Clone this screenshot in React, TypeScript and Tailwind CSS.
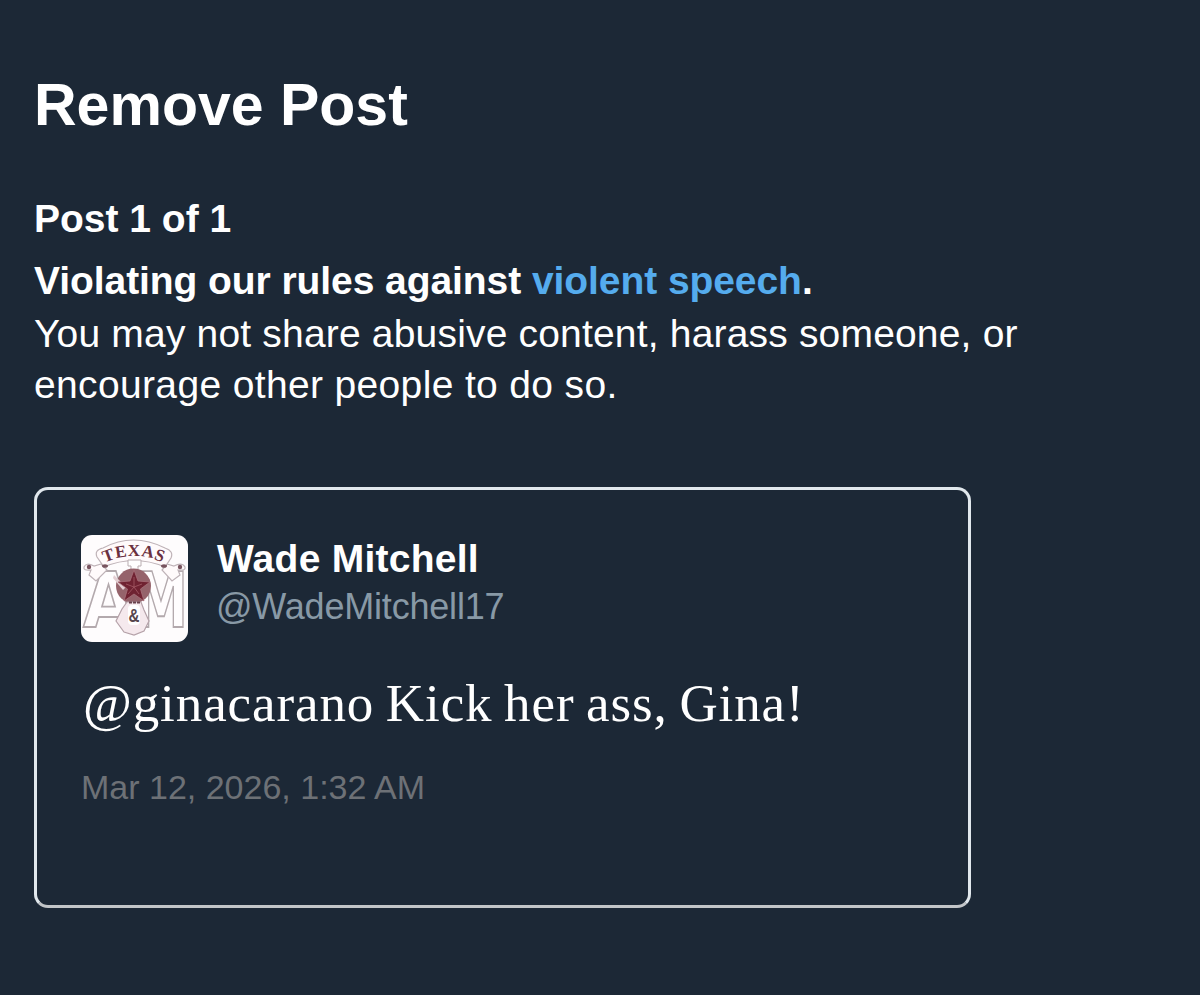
const post = {
  name: "Wade Mitchell",
  handle: "@WadeMitchell17",
  text: "@ginacarano Kick her ass, Gina!",
  date: "Mar 12, 2026, 1:32 AM",
};

// Banner letters with their place and tilt along the arc
const bannerLetters = [
  { char: "T", x: 29, y: 25.5, rotate: -20 },
  { char: "E", x: 40.5, y: 22, rotate: -9 },
  { char: "X", x: 53, y: 20.5, rotate: 0 },
  { char: "A", x: 66, y: 22, rotate: 10 },
  { char: "S", x: 77, y: 25.5, rotate: 20 },
];

function Avatar() {
  return (
    <svg
      viewBox="0 0 107 107"
      className="w-[107px] h-[107px] shrink-0 rounded-[11px] bg-[#fefcfd]"
    >
      {/* Big letters */}
      <g
        fill="#fffdfe"
        stroke="#b3a9ad"
        strokeWidth="1.8"
        fontFamily="'DejaVu Sans', sans-serif"
        fontWeight="bold"
        fontSize="76"
      >
        <text x="2" y="92" textLength="51" lengthAdjust="spacingAndGlyphs">A</text>
        <text x="53" y="92" textLength="54" lengthAdjust="spacingAndGlyphs">M</text>
      </g>

      {/* Ribbon */}
      <g fill="#fffafb" stroke="#bfb3b8" strokeWidth="1.2">
        <path d="M20 29 L13 31 Q5 27 3 32 Q2 36 10 35 L8 40 L15 46 L26 35 Z" />
        <path d="M86 29 L93 31 Q101 27 104 32 Q105 36 97 35 L99 40 L91 46 L81 35 Z" />
        <path d="M16 22 Q13 15 22 13 Q52 -3 84 13 Q93 16 90 23 L84 32 Q53 19 23 32 Z" />
      </g>
      <g fill="#78545f">
        <circle cx="8" cy="32" r="2.2" />
        <ellipse cx="24" cy="31" rx="3" ry="1.8" />
        <ellipse cx="83" cy="31" rx="3" ry="1.8" />
        <circle cx="99" cy="32" r="2.2" />
      </g>
      <g
        fill="#6b3040"
        fontFamily="'Liberation Serif', serif"
        fontWeight="bold"
        fontSize="17"
        textAnchor="middle"
      >
        {bannerLetters.map((l) => (
          <text key={l.char} x={l.x} y={l.y} transform={`rotate(${l.rotate} ${l.x} ${l.y})`}>
            {l.char}
          </text>
        ))}
      </g>

      {/* Star emblem */}
      <path d="M47 25 H60 V31 H57 V43 H50 V31 H47 Z" fill="#fff" stroke="#b9adb1" />
      <circle cx="52.5" cy="51" r="17.5" fill="#95636b" />
      <path d="M33 40 L45 52 L42 55 L32 43 Z" fill="#e4cfd3" />
      <path
        d="M53 35 L57 46 L69 47 L59.500 54 L63 66 L53 59 L43 66 L46.500 54 L37 47 L49 46 Z"
        fill="#6f2231"
        stroke="#a8707a"
        strokeWidth="0.8"
      />
      <path
        d="M53 42 V52 L61 49 M53 52 L58 59 M53 52 L47 59 M53 52 L45 49"
        fill="none"
        stroke="#a45b66"
        strokeWidth="0.8"
      />

      {/* Ampersand badge */}
      <path
        d="M46 67 H60 L63 75 L68 86 L63 96 L53 100 L43 97 L35 86 L41 74 Z"
        fill="#f5e9ed"
        stroke="#b5a2a9"
        strokeWidth="1.2"
      />
      <path d="M48 67.500 H59" stroke="#68404b" strokeWidth="2" strokeDasharray="3 1" />
      <rect x="47" y="70" width="12" height="20" rx="4" fill="#fff" />
      <text
        x="53"
        y="87"
        fill="#56474d"
        fontFamily="'Liberation Sans', sans-serif"
        fontWeight="bold"
        fontSize="19"
        textAnchor="middle"
        textLength="11"
        lengthAdjust="spacingAndGlyphs"
      >
        &amp;
      </text>
    </svg>
  );
}

function PostCard() {
  return (
    <div className="mt-[77px] w-[937px] h-[421px] rounded-[14px] border-3 border-[#e1e8ed] border-b-[#c2c5c8] px-[44px] pt-[45px]">
      <div className="flex gap-[28px]">
        <Avatar />
        <div>
          <div className="pl-px text-[39px] leading-[48px] font-bold tracking-[0.25px]">{post.name}</div>
          <div className="text-[36px] leading-[48px] tracking-[-0.2px] text-[#8899a6]">
            {post.handle}
          </div>
        </div>
      </div>
      <p className="mt-[31px] pl-[2px] font-['Liberation_Serif',serif] text-[53px] leading-[60px] tracking-[0.9px] [word-spacing:-2.500px] whitespace-nowrap">
        {post.text}
      </p>
      <div className="mt-[32px] text-[34px] leading-[44px] text-[#6d7176]">{post.date}</div>
    </div>
  );
}

export default function App() {
  return (
    <div className="min-h-[995px] bg-[#1c2836] px-[34px] pt-[70px] font-['Liberation_Sans',Arial,sans-serif] text-white">
      <h1 className="text-[59px] leading-[70px] font-bold">Remove Post</h1>

      {/* Violation */}
      <h2 className="mt-[54px] text-[39px] leading-[50px] font-bold">Post 1 of 1</h2>
      <p className="mt-[12px] text-[39px] leading-[50px] font-bold tracking-[-0.07px]">
        Violating our rules against{" "}
        <a href="#" className="text-[#55acee]">violent speech</a>.
      </p>
      <p className="mt-[3px] text-[39px] leading-[50.5px] tracking-[0.18px]">
        You may not share abusive content, harass someone, or
        <br />
        <span className="tracking-[0.35px]">encourage other people to do so.</span>
      </p>

      <PostCard />
    </div>
  );
}
